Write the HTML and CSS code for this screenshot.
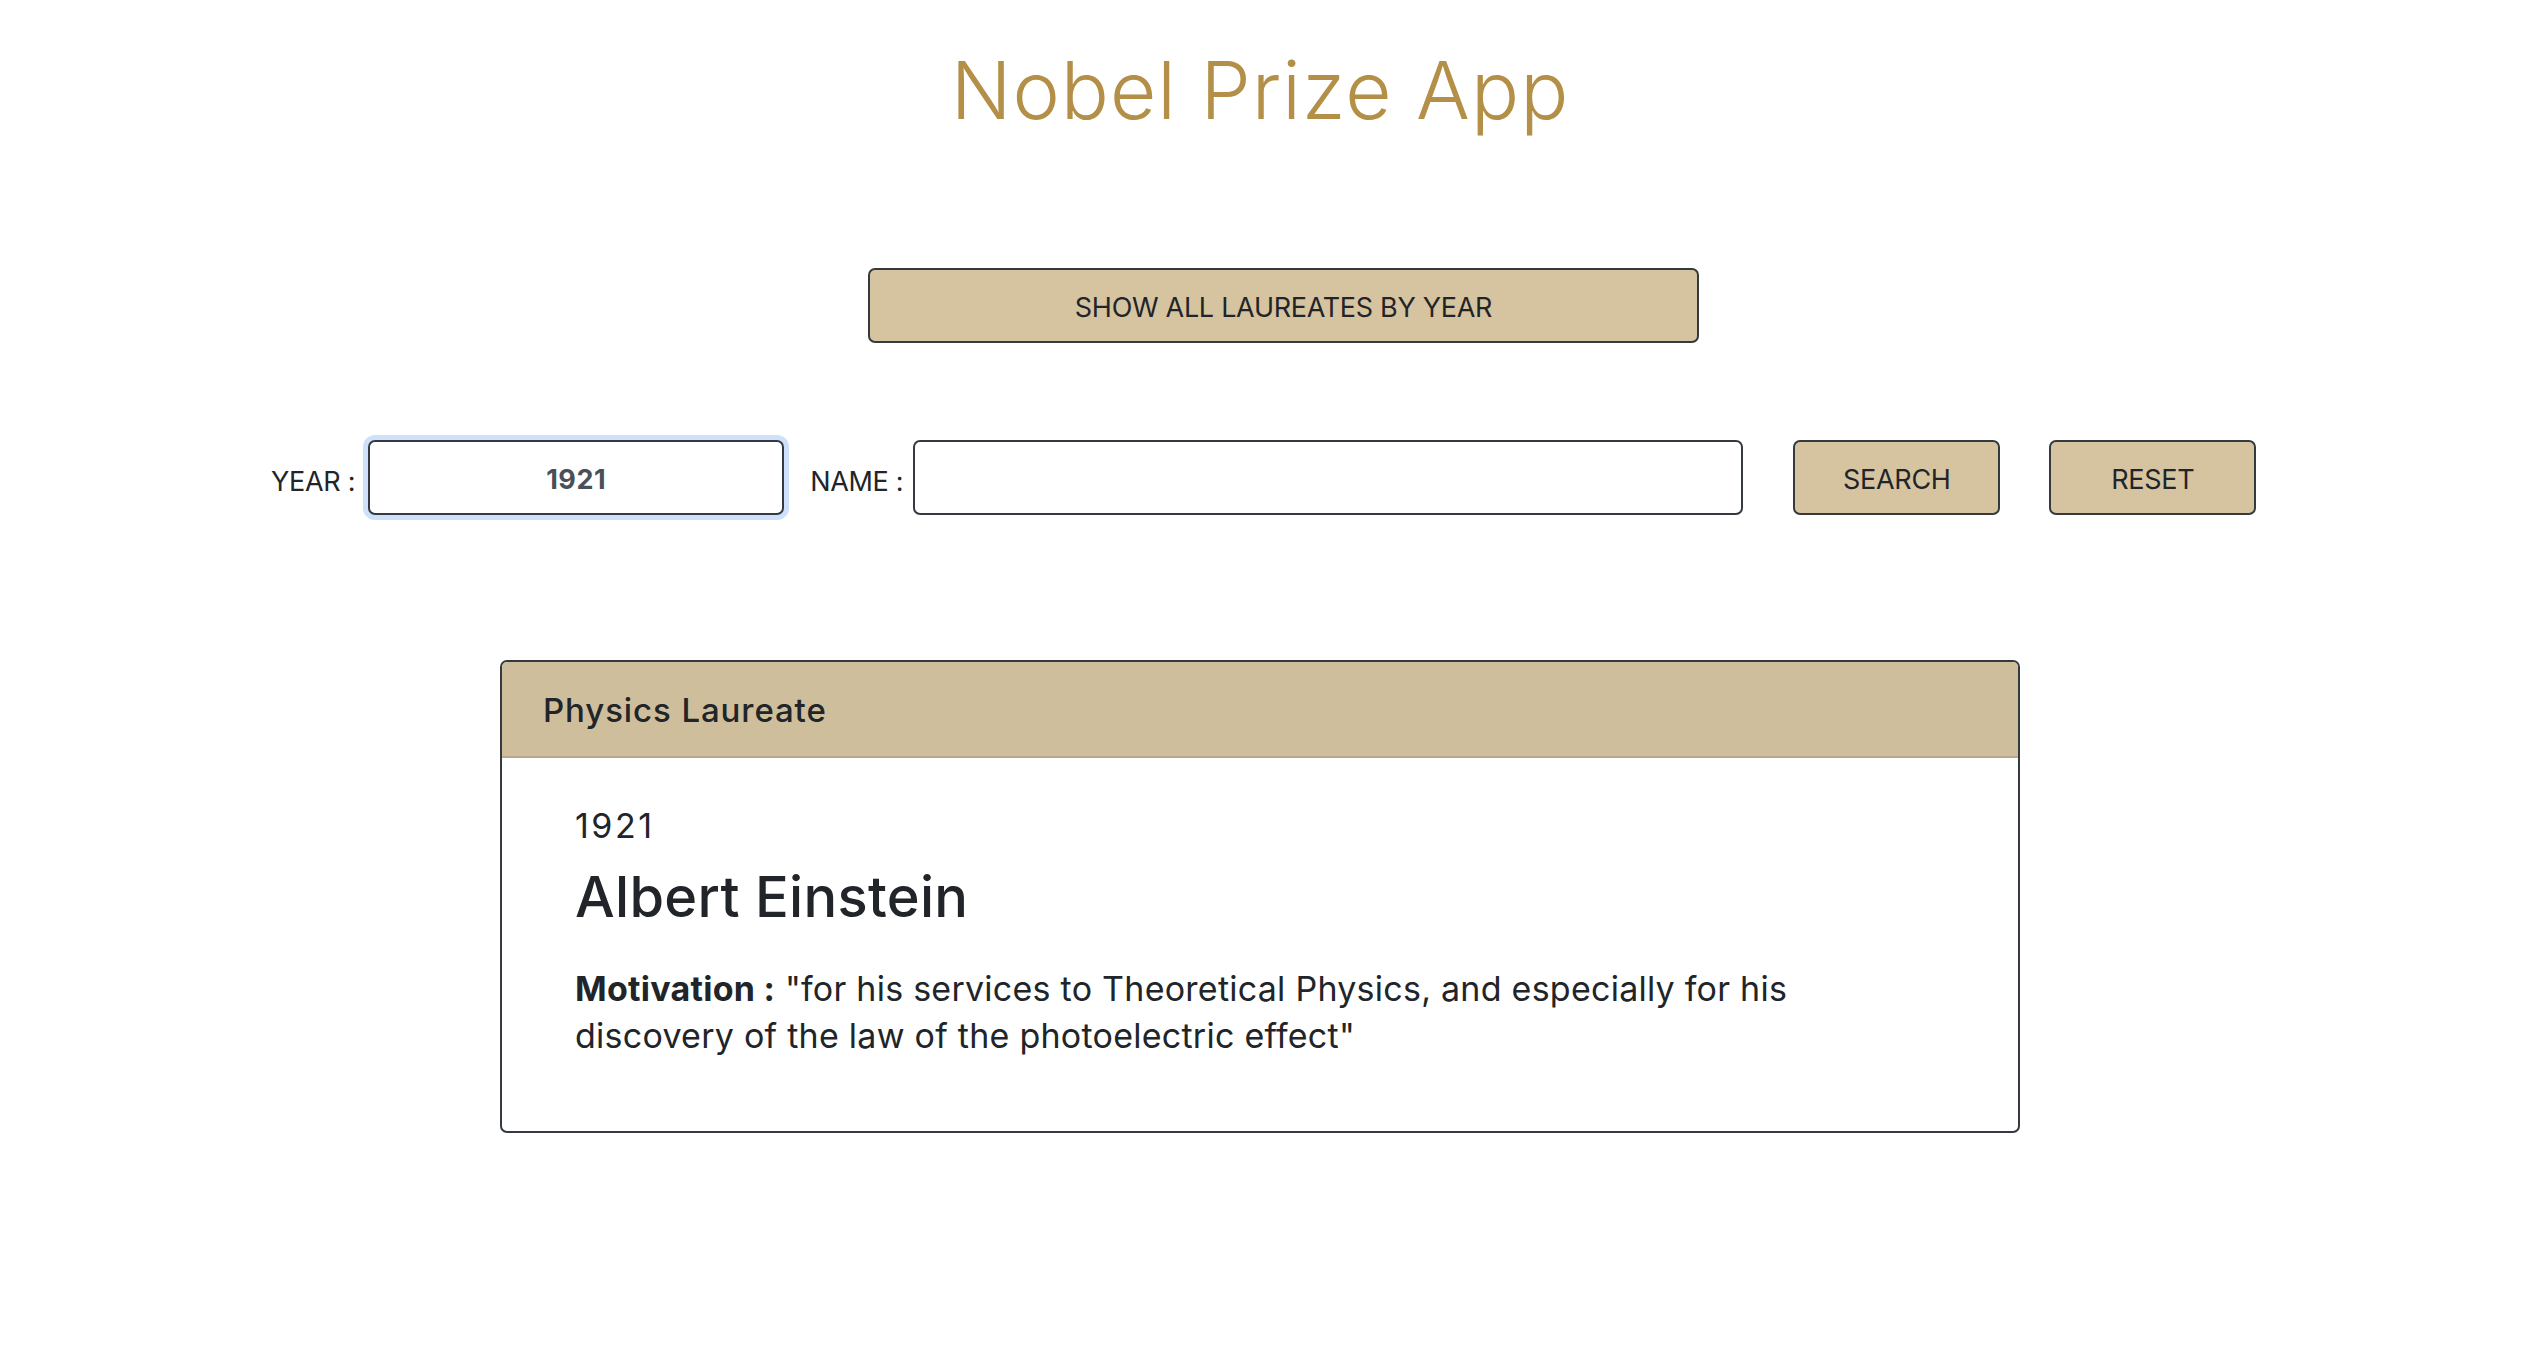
FILE: index.html
```html
<!DOCTYPE html>
<html lang="en">
<head>
<meta charset="utf-8">
<title>Nobel Prize App</title>
<link rel="stylesheet" href="styles.css">
</head>
<body>
<div class="page">
  <h1 class="title">Nobel Prize App</h1>

  <div class="actions">
    <button class="btn btn-wide" type="button">SHOW ALL LAUREATES BY YEAR</button>
  </div>

  <form class="search-row" onsubmit="return false">
    <label class="field-label" for="year">YEAR :</label>
    <input id="year" class="field year-field" type="text" value="1921" autofocus>
    <label class="field-label name-label" for="name">NAME :</label>
    <input id="name" class="field name-field" type="text">
    <button class="btn btn-small search-btn" type="button">SEARCH</button>
    <button class="btn btn-small reset-btn" type="button">RESET</button>
  </form>

  <section class="card">
    <div class="card-header">Physics Laureate</div>
    <div class="card-body">
      <div class="year">1921</div>
      <h2 class="laureate">Albert Einstein</h2>
      <p class="motivation"><strong>Motivation :</strong> "for his services to Theoretical Physics, and especially for his discovery of the law of the photoelectric effect"</p>
    </div>
  </section>
</div>
</body>
</html>
```

FILE: styles.css
```css
* {
  box-sizing: border-box;
}

html, body {
  margin: 0;
  padding: 0;
  background: #ffffff;
}

body {
  font-family: Inter, "Noto Sans", "Liberation Sans", sans-serif;
  color: #212529;
}

.page {
  width: 2520px;
  padding-top: 42px;
  padding-bottom: 200px;
}

.title {
  margin: 0;
  text-align: center;
  font-size: 80px;
  line-height: 96px;
  font-weight: 300;
  color: #b38f47;
  letter-spacing: 1px;
}

.actions {
  display: flex;
  justify-content: center;
  padding-left: 47px;
  margin-top: 130px;
}

.btn {
  font-family: Inter, "Noto Sans", "Liberation Sans", sans-serif;
  background: #d6c4a0;
  color: #212529;
  border: 2px solid #343a40;
  border-radius: 7px;
  font-size: 27px;
  font-weight: 400;
  height: 75px;
  padding: 4px 0 0;
  display: flex;
  align-items: center;
  justify-content: center;
  cursor: pointer;
  letter-spacing: -0.3px;
}

.btn-wide {
  width: 831px;
}

.search-row {
  display: flex;
  align-items: center;
  margin: 97px 0 0 0;
  padding-left: 271px;
}

.field-label {
  font-size: 27px;
  color: #212529;
  margin-right: 13px;
  margin-top: 7px;
  letter-spacing: -0.3px;
}

.name-label {
  margin-left: 26px;
  margin-right: 10px;
}

.field {
  height: 75px;
  border: 2px solid #343a40;
  border-radius: 7px;
  background: #fff;
  font-family: Inter, "Noto Sans", "Liberation Sans", sans-serif;
  font-size: 27px;
  color: #495057;
  padding: 4px 16px 0;
  outline: none;
}

.year-field {
  width: 416px;
  text-align: center;
  font-weight: 700;
  letter-spacing: 0.5px;
  box-shadow: 0 0 0 5px #cfe0fb;
  caret-color: #212529;
}

.name-field {
  width: 830px;
}

.btn-small {
  height: 75px;
}

.search-btn {
  width: 207px;
  margin-left: 50px;
}

.reset-btn {
  width: 207px;
  margin-left: 49px;
}

.card {
  width: 1520px;
  margin: 145px auto 0;
  border: 2px solid #343a40;
  border-radius: 7px;
  overflow: hidden;
}

.card-header {
  background: #cfbe9c;
  border-bottom: 2px solid #b8a887;
  font-size: 33px;
  line-height: 49.5px;
  font-weight: 500;
  padding: 24px 41px 20px;
  letter-spacing: 0.9px;
}

.card-body {
  padding: 43px 73px 72px;
}

.year {
  font-size: 34px;
  line-height: 49.5px;
  font-weight: 400;
  letter-spacing: 2.5px;
}

.laureate {
  margin: 14px 0 0;
  font-size: 56px;
  line-height: 66px;
  font-weight: 500;
  letter-spacing: 0.3px;
}

.motivation {
  margin: 35px 0 0;
  font-size: 34px;
  line-height: 47px;
  max-width: 1265px;
  letter-spacing: 0.25px;
}

.motivation strong {
  font-weight: 700;
}
```
